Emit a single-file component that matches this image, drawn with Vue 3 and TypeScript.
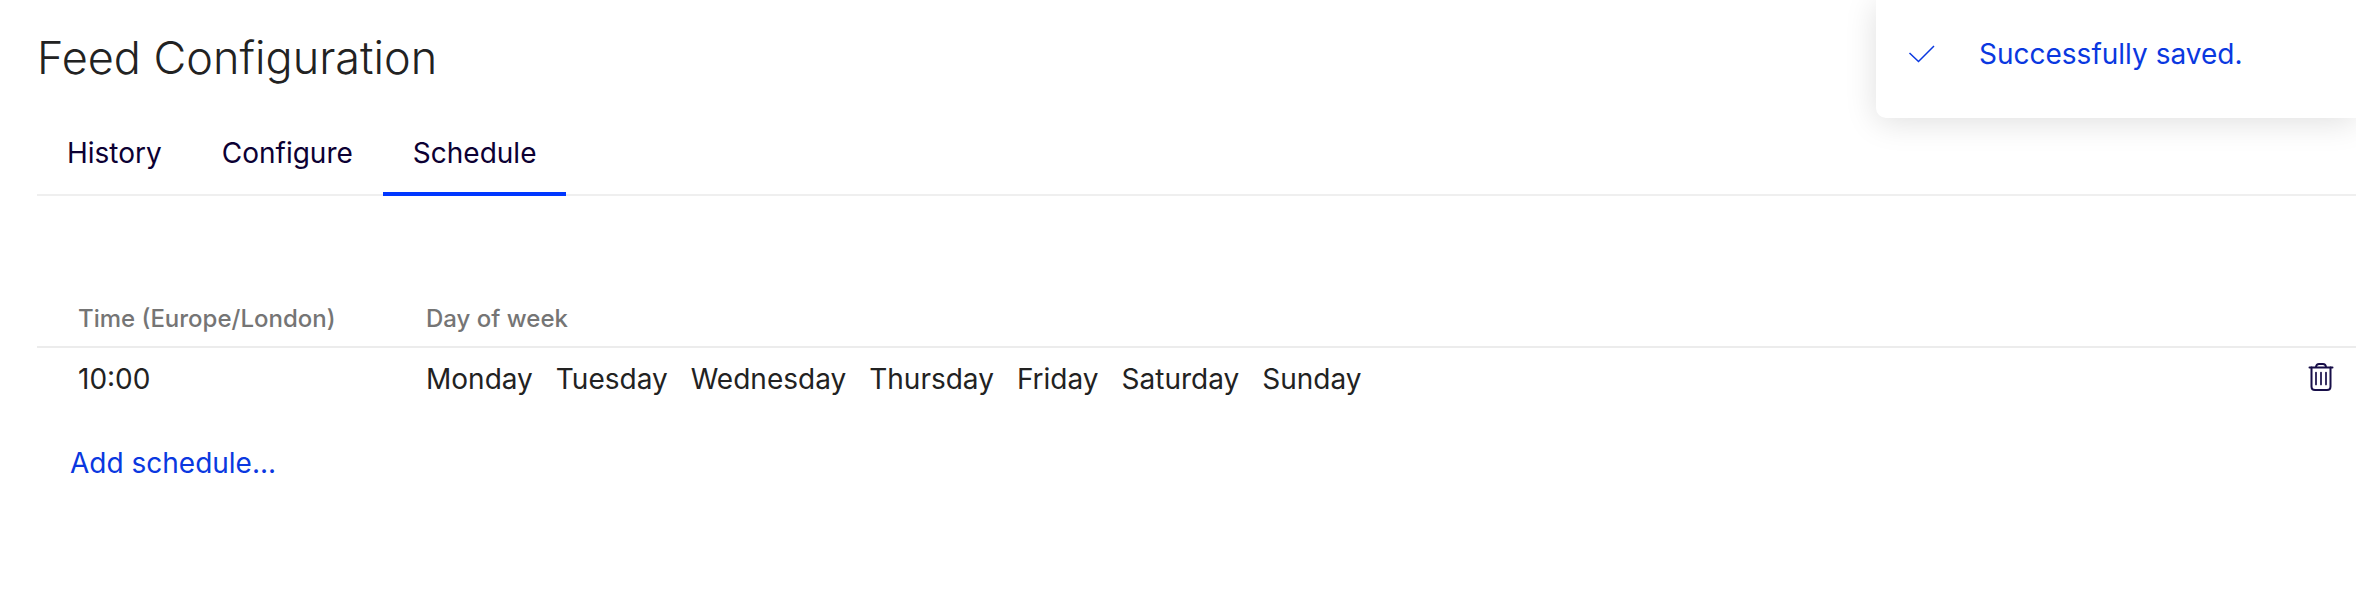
<script setup lang="ts">
import { ref } from 'vue'

interface Schedule {
  id: number
  time: string
  days: string[]
}

const tabs: string[] = ['History', 'Configure', 'Schedule']
const activeTab = ref<string>('Schedule')

const schedules = ref<Schedule[]>([
  {
    id: 1,
    time: '10:00',
    days: ['Monday', 'Tuesday', 'Wednesday', 'Thursday', 'Friday', 'Saturday', 'Sunday'],
  },
])

function removeSchedule(id: number): void {
  schedules.value = schedules.value.filter((s) => s.id !== id)
}
</script>

<template>
  <main class="page">
    <h1 class="title">Feed Configuration</h1>

    <div class="tabs" role="tablist">
      <button
        v-for="tab in tabs"
        :key="tab"
        type="button"
        role="tab"
        class="tab"
        :class="{ active: tab === activeTab }"
        :aria-selected="tab === activeTab"
        @click="activeTab = tab"
      >
        {{ tab }}
      </button>
    </div>

    <table class="schedules">
      <thead>
        <tr>
          <th class="time" scope="col">Time (Europe/London)</th>
          <th scope="col">Day of week</th>
          <td class="actions"></td>
        </tr>
      </thead>
      <tbody>
        <tr v-for="schedule in schedules" :key="schedule.id">
          <td>{{ schedule.time }}</td>
          <td>
            <div class="days">
              <span v-for="day in schedule.days" :key="day">{{ day }}</span>
            </div>
          </td>
          <td class="actions">
            <button
              type="button"
              class="delete"
              aria-label="Delete schedule"
              @click="removeSchedule(schedule.id)"
            >
              <svg width="26" height="30" viewBox="0 0 26 30" fill="none" stroke="currentColor" stroke-width="2" stroke-linecap="round" stroke-linejoin="round">
                <path d="M1.500 5.500H24.500" />
                <path d="M8 5C8.300 2.600 9.400 2 11 2H15C16.600 2 17.700 2.600 18 5" />
                <path d="M3.500 5.500V24.500Q3.500 28 7 28H19Q22.500 28 22.500 24.500V5.500" />
                <path d="M8 10.500V22.500M13 10.500V22.500M18 10.500V22.500" stroke-width="1.700" />
              </svg>
            </button>
          </td>
        </tr>
      </tbody>
    </table>

    <a class="add" href="#add">Add schedule...</a>

    <div class="toast" role="status">
      <svg width="28" height="20" viewBox="0 0 28 20" fill="none" stroke="currentColor" stroke-width="1.500">
        <path d="M1.500 9L10.500 17.500L26 2" />
      </svg>
      <span>Successfully saved.</span>
    </div>
  </main>
</template>

<style>
body {
  margin: 0;
  background: #fff;
}
</style>

<style scoped>
.page {
  position: relative;
  padding: 28px 0 40px 37px;
  overflow: hidden;
  font-family: Inter, "Liberation Sans", sans-serif;
  font-size: 28px;
  line-height: 40px;
  color: #222;
}

.title {
  margin: 0;
  font-size: 45px;
  font-weight: 300;
  line-height: 60px;
}

.tabs {
  display: flex;
  margin-top: 32px;
  box-shadow: inset 0 -2px #efefef;
}

.tab {
  padding: 13px 30px 19px;
  border: 0;
  border-bottom: 4px solid transparent;
  background: none;
  font: inherit;
  color: #0c0033;
  cursor: pointer;
}

.tab.active {
  border-bottom-color: #0037ff;
}

.schedules {
  width: 100%;
  margin-top: 98px;
  border-collapse: collapse;
}

.schedules th,
.schedules td {
  padding: 11px 41px;
  text-align: left;
  font-weight: 400;
}

.schedules thead th,
.schedules thead td {
  padding-top: 5px;
  padding-bottom: 7px;
  border-bottom: 2px solid #ececec;
  font-size: 24px;
  font-weight: 500;
  color: #757575;
}

.schedules .time {
  width: 266px;
}

.schedules .actions {
  width: 26px;
  padding: 9px 22px 13px 0;
}

.days {
  display: flex;
  gap: 23px;
}

.delete {
  display: flex;
  padding: 0;
  border: 0;
  background: none;
  color: #170e48;
  cursor: pointer;
}

.add {
  display: inline-block;
  margin: 33px 0 0 33px;
  color: #0a38e0;
  text-decoration: none;
}

.toast {
  position: absolute;
  top: 0;
  right: 0;
  display: flex;
  align-items: center;
  gap: 43px;
  box-sizing: border-box;
  width: 480px;
  padding: 34px 32px 44px;
  border-bottom-left-radius: 10px;
  background: #fff;
  box-shadow: 0 4px 32px rgba(0, 0, 0, 0.13);
  color: #0a38e0;
}
</style>
